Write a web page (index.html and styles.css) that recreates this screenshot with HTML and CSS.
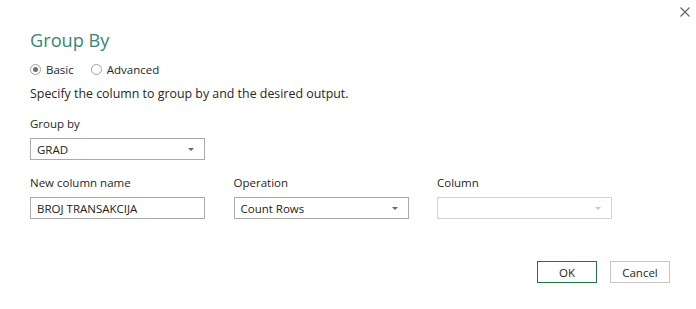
FILE: index.html
```html
<!DOCTYPE html>
<html lang="en">
<head>
    <meta charset="UTF-8">
    <meta name="viewport" content="width=device-width, initial-scale=1.0">
    <title>Group By</title>
    <link rel="stylesheet" href="styles.css">
</head>
<body>
    <div class="dialog">
        <div class="top-bar">
            <button class="close" type="button" aria-label="Close">
                <svg width="10" height="10" viewBox="0 0 10 10"><path d="M0.5 0.5 L9.5 9.5 M9.5 0.5 L0.5 9.5" stroke="#666" stroke-width="1.2"/></svg>
            </button>
        </div>
        <h1 class="title">Group By</h1>
        <div class="modes">
            <label class="radio"><span class="dot checked"></span>Basic</label>
            <label class="radio"><span class="dot"></span>Advanced</label>
        </div>
        <p class="desc">Specify the column to group by and the desired output.</p>

        <div class="label">Group by</div>
        <div class="box select">GRAD<span class="arrow"></span></div>

        <div class="fields">
            <div class="label">New column name</div>
            <div class="label">Operation</div>
            <div class="label">Column</div>
            <div class="box">BROJ TRANSAKCIJA</div>
            <div class="box select">Count Rows<span class="arrow"></span></div>
            <div class="box select disabled"><span class="arrow"></span></div>
        </div>

        <div class="buttons">
            <button type="button" class="btn ok">OK</button>
            <button type="button" class="btn">Cancel</button>
        </div>
    </div>
</body>
</html>
```

FILE: styles.css
```css
body {
    margin: 0;
    background-color: #fff;
    font-family: "Segoe UI", "Open Sans", sans-serif;
    font-size: 11.5px;
    color: #262626;
}

.dialog {
    width: 696px;
    height: 309px;
    box-sizing: border-box;
    padding: 0 26px 0 30px;
    display: flex;
    flex-direction: column;
}

.top-bar {
    height: 24px;
    display: flex;
    align-items: center;
    justify-content: flex-end;
    margin-right: -20px;
}

.close {
    border: none;
    background: none;
    padding: 0;
    width: 10px;
    height: 10px;
    display: flex;
}

.title {
    margin: 3px 0 0;
    font-size: 18.2px;
    line-height: 26px;
    font-weight: normal;
    color: #35877a;
}

.modes {
    margin-top: 7px;
    display: flex;
    gap: 17px;
    height: 18px;
    align-items: center;
}

.radio {
    display: flex;
    align-items: center;
    gap: 5px;
}

.dot {
    width: 9px;
    height: 9px;
    border: 1px solid #a0a0a0;
    border-radius: 50%;
    box-sizing: content-box;
    position: relative;
}

.dot.checked::after {
    content: "";
    position: absolute;
    left: 2px;
    top: 2px;
    width: 5px;
    height: 5px;
    border-radius: 50%;
    background-color: #707070;
}

.desc {
    margin: 7px 0 0;
    font-size: 12.4px;
    line-height: 18px;
}

.label {
    line-height: 18px;
    margin-top: 12px;
}

.box {
    width: 175px;
    height: 22px;
    box-sizing: border-box;
    border: 1px solid #ababab;
    margin-top: 5px;
    padding: 0 6px;
    display: flex;
    align-items: center;
    color: #222;
}

.arrow {
    width: 0;
    height: 0;
    margin-left: auto;
    border-left: 3px solid transparent;
    border-right: 3px solid transparent;
    border-top: 3px solid #666;
    margin-right: 4px;
}

.box.disabled {
    border-color: #d2d2d2;
}

.box.disabled .arrow {
    border-top-color: #c8c8c8;
}

.fields {
    display: grid;
    grid-template-columns: 175px 175px 175px;
    column-gap: 28.5px;
}

.fields .label {
    margin-top: 14px;
}

.buttons {
    margin-top: 42px;
    display: flex;
    justify-content: flex-end;
    gap: 13px;
}

.btn {
    width: 60px;
    height: 22px;
    box-sizing: border-box;
    background-color: #fff;
    border: 1px solid #c8c8c8;
    font-family: inherit;
    font-size: 11.5px;
    color: #262626;
    padding: 0;
}

.btn.ok {
    border-color: #217346;
}
```
